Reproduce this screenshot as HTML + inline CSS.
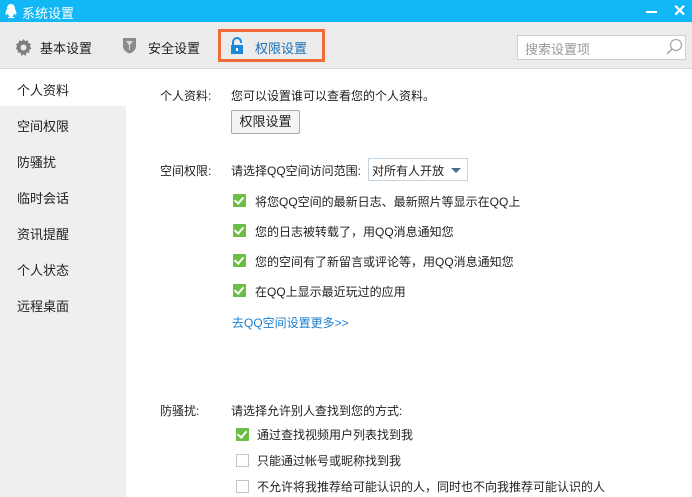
<!DOCTYPE html>
<html><head><meta charset="utf-8"><style>
*{margin:0;padding:0;box-sizing:border-box}
body{width:692px;height:497px;overflow:hidden;background:#fff;font-family:"Liberation Sans","Noto Sans CJK SC",sans-serif;font-size:12px;color:#222;position:relative}
.abs{position:absolute;white-space:nowrap}
.title{left:0;top:0;width:692px;height:22px;background:#12b7f5;color:#fff}
.tb{left:0;top:22px;width:692px;height:47px;background:#ececec;border-bottom:1px solid #d8d8d8}
.side{left:0;top:70px;width:126px;height:427px;background:#efefef}
.cb{width:13px;height:13px;background:#6cbd45;border-radius:1px}
.cbe{width:13px;height:13px;border:1px solid #c5c5c5;background:#fff}
</style></head><body>
<div class="abs title">
<svg class="abs" style="left:4px;top:3px" width="14" height="16" viewBox="0 0 14 16"><path d="M7 1C4 1 3 3.5 3 6 2 8 1 10 2 12c1 0 1.5-1 2-2 0 1.5.5 3 2 3.5-2 .5-3 1-2 1.5 1 .3 3 0 3-.5 0 .5 2 .8 3 .5 1-.5 0-1-2-1.5 1.5-.5 2-2 2-3.5.5 1 1 2 2 2 1-2 0-4-1-6 0-2.5-1-5-4-5z" fill="#fff"/></svg>
<span class="abs" style="left:22px;top:3px;font-size:13px">系统设置</span>
<div class="abs" style="left:646px;top:11px;width:11px;height:2px;background:#fff"></div>
<span class="abs" style="left:673px;top:1px;font-size:16px;font-weight:bold">✕</span>
</div>
<div class="abs tb">
<svg class="abs" style="left:15px;top:17px" width="17" height="17" viewBox="0 0 16 16"><path d="M8 0l1.5 2 2.5-.7.5 2.5 2.5 1-1 2.2 1.5 2-2.2 1.3.2 2.6-2.6-.2L9.8 16 8 14.2 6.2 16 5.1 12.7l-2.6.2.2-2.6L.5 9l1.5-2-1-2.2 2.5-1 .5-2.5 2.5.7z" fill="#7d7d7d"/><circle cx="8" cy="8" r="2.8" fill="#ececec"/></svg>
<span class="abs" style="left:40px;top:16px;font-size:13px">基本设置</span>
<svg class="abs" style="left:122px;top:15px" width="15" height="17" viewBox="0 0 15 17"><path d="M1 1h13v8c0 4-3.5 6.5-6.5 7.5C4.5 15.5 1 13 1 9z" fill="#8a8a8a"/><path d="M4 4h7L8 8v5H7V8z" fill="#ddd"/></svg>
<span class="abs" style="left:148px;top:16px;font-size:13px">安全设置</span>
<div class="abs" style="left:218px;top:7px;width:107px;height:33px;border:3px solid #f26b3a"></div>
<svg class="abs" style="left:230px;top:15px" width="14" height="17" viewBox="0 0 14 17"><path d="M3 8V5a4 4 0 018 0v1" stroke="#1a8ad8" stroke-width="2" fill="none"/><rect x="1" y="8" width="12" height="9" fill="#1a8ad8"/><rect x="6" y="11" width="2" height="3" fill="#fff"/></svg>
<span class="abs" style="left:255px;top:16px;font-size:13px;color:#1a6fb8">权限设置</span>
<div class="abs" style="left:517px;top:13px;width:169px;height:25px;background:#fff;border:1px solid #cfcfcf"></div>
<span class="abs" style="left:525px;top:17px;font-size:13px;color:#999">搜索设置项</span>
<svg class="abs" style="left:666px;top:16px" width="17" height="17" viewBox="0 0 17 17"><circle cx="10" cy="7" r="5.5" stroke="#aaa" stroke-width="1.3" fill="none"/><path d="M6 11l-5 5" stroke="#aaa" stroke-width="1.6"/></svg>
</div>
<div class="abs side"></div>
<div class="abs" style="left:0;top:70px;width:126px;height:36px;background:#fff"></div>
<span class="abs" style="left:17px;top:80px;font-size:13px">个人资料</span>
<span class="abs" style="left:17px;top:116px;font-size:13px">空间权限</span>
<span class="abs" style="left:17px;top:152px;font-size:13px">防骚扰</span>
<span class="abs" style="left:17px;top:188px;font-size:13px">临时会话</span>
<span class="abs" style="left:17px;top:224px;font-size:13px">资讯提醒</span>
<span class="abs" style="left:17px;top:260px;font-size:13px">个人状态</span>
<span class="abs" style="left:17px;top:296px;font-size:13px">远程桌面</span>

<span class="abs" style="left:160px;top:87px">个人资料:</span>
<span class="abs" style="left:231px;top:87px">您可以设置谁可以查看您的个人资料。</span>
<div class="abs" style="left:231px;top:110px;width:69px;height:24px;border:1px solid #aaa;border-radius:2px;background:#f4f4f4;font-size:13px;text-align:center;line-height:22px;color:#222">权限设置</div>

<span class="abs" style="left:160px;top:162px">空间权限:</span>
<span class="abs" style="left:231px;top:162px">请选择QQ空间访问范围:</span>
<div class="abs" style="left:368px;top:158px;width:100px;height:23px;border:1px solid #c6d4e0;background:#fff"></div>
<span class="abs" style="left:372px;top:162px">对所有人开放</span>
<div class="abs" style="left:451px;top:168px;border-left:5px solid transparent;border-right:5px solid transparent;border-top:5px solid #4a6a8a"></div>

<div class="abs cb" style="left:233px;top:194px"></div>
<div class="abs cb" style="left:233px;top:224px"></div>
<div class="abs cb" style="left:233px;top:254px"></div>
<div class="abs cb" style="left:233px;top:284px"></div>
<span class="abs" style="left:255px;top:193px">将您QQ空间的最新日志、最新照片等显示在QQ上</span>
<span class="abs" style="left:255px;top:223px">您的日志被转载了，用QQ消息通知您</span>
<span class="abs" style="left:255px;top:253px">您的空间有了新留言或评论等，用QQ消息通知您</span>
<span class="abs" style="left:255px;top:283px">在QQ上显示最近玩过的应用</span>
<span class="abs" style="left:232px;top:314px;color:#1a7fd0">去QQ空间设置更多&gt;&gt;</span>

<span class="abs" style="left:160px;top:402px">防骚扰:</span>
<span class="abs" style="left:231px;top:402px">请选择允许别人查找到您的方式:</span>
<div class="abs cb" style="left:236px;top:428px"></div>
<div class="abs cbe" style="left:236px;top:454px"></div>
<div class="abs cbe" style="left:236px;top:480px"></div>
<span class="abs" style="left:257px;top:426px">通过查找视频用户列表找到我</span>
<span class="abs" style="left:257px;top:452px">只能通过帐号或昵称找到我</span>
<span class="abs" style="left:257px;top:478px">不允许将我推荐给可能认识的人，同时也不向我推荐可能认识的人</span>
<style>.cb::after{content:"";position:absolute;left:3px;top:1px;width:4px;height:7px;border:solid #fff;border-width:0 2px 2px 0;transform:rotate(40deg)}</style>
</body></html>
